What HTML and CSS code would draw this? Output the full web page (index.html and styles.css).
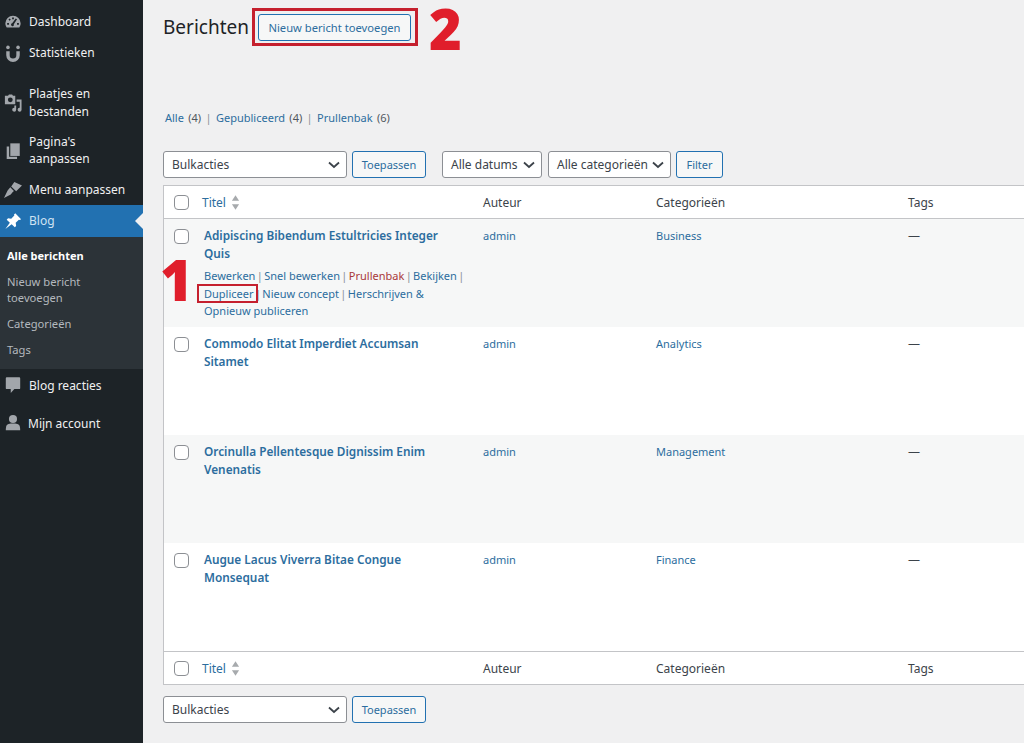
FILE: index.html
```html
<!DOCTYPE html>
<html lang="nl">
<head>
<meta charset="utf-8">
<title>Berichten</title>
<link rel="stylesheet" href="styles.css">
</head>
<body>
<div class="app">
  <nav class="sidebar">
    <ul class="menu">
      <li class="item h31 first"><svg class="ico" viewBox="0 0 20 20"><path d="M10 3a8.500 8.500 0 0 0-8.500 8.500c0 1.800.6 3.400 1.500 4.500h14c.9-1.100 1.500-2.700 1.500-4.500A8.500 8.500 0 0 0 10 3zM9 5h2v2H9zM5 7l1.500-1 1 1.500-1.500 1zM3.500 11h2v2h-2zM14.500 11h2v2h-2zM13 6.200l1.500.8-3.600 5.500a1.600 1.600 0 1 1-1.800-1z" fill-rule="evenodd"/></svg><span>Dashboard</span></li>
      <li class="item h31"><svg class="ico" viewBox="0 0 20 20"><path d="M2.500 8h3.800v4.500a3.700 3.700 0 0 0 7.400 0V8h3.800v4.500a7.500 7.500 0 0 1-15 0z"/><circle cx="4.400" cy="3.800" r="2"/><circle cx="15.600" cy="3.800" r="2"/></svg><span>Statistieken</span></li>
      <li class="item media"><svg class="ico" viewBox="0 0 20 20"><path d="M1 2h3.500l1-1.500h3.500l1 1.500h2.500v9.500H1zM7 3.800a2.700 2.700 0 1 0 0 5.400 2.700 2.700 0 0 0 0-5.400z" fill-rule="evenodd"/><path d="M14 6h5.500v11.500a2.200 2.200 0 1 1-2-2.200V8.500H14zM13.500 12.800v4.700a2.200 2.200 0 1 1-2-2.200v-2.500z"/></svg><span>Plaatjes en bestanden</span></li>
      <li class="item pages"><svg class="ico" viewBox="0 0 20 20"><path d="M7 1.500h10.500v14H7z"/><path d="M3 5h2.700v11.500h8.800V19H3z"/></svg><span>Pagina's aanpassen</span></li>
      <li class="item h31"><svg class="ico" viewBox="0 0 20 20"><path d="M20 5 11.500 1 8 6l5.500 5.500zM7 7 4 10.500 0 19l7.500-4 2-2.500 1.500-1.500z"/></svg><span>Menu aanpassen</span></li>
      <li class="item current"><svg class="ico" viewBox="0 0 20 20"><path d="M12.500 1.500 19 8l-1.500 1-1-.5-3.500 3.500.5 3.500-1.500 1.500-3.500-3.500L1.500 19l5-7L3 8.500 4.500 7l3.500.5L11.500 4 11 3z"/></svg><span>Blog</span><i class="notch"></i></li>
      <li class="submenu">
        <a class="sub active">Alle berichten</a>
        <a class="sub">Nieuw bericht toevoegen</a>
        <a class="sub">Categorieën</a>
        <a class="sub">Tags</a>
      </li>
      <li class="item reacties"><svg class="ico" viewBox="0 0 20 20"><path d="M3 1.500h14a1 1 0 0 1 1 1v11a1 1 0 0 1-1 1h-5.500L7.500 19v-4.500H3a1 1 0 0 1-1-1v-11a1 1 0 0 1 1-1z"/></svg><span>Blog reacties</span></li>
      <li class="item account"><svg class="ico" viewBox="0 0 20 20"><circle cx="10" cy="5.500" r="4.500"/><path d="M3 12.500c1-1.300 3-1.800 4.500-2h5c1.500.2 3.500.7 4.500 2 .6.800 1 3 1 5.500H2c0-2.500.4-4.700 1-5.500z"/></svg><span>Mijn account</span></li>
    </ul>
  </nav>

  <main class="content">
    <header class="head">
      <h1>Berichten</h1>
      <a class="btn new">Nieuw bericht toevoegen<b class="mark mark-new"></b></a>
      <strong class="num num-2">2</strong>
    </header>

    <p class="filters"><a>Alle</a> (4) <em>|</em> <a>Gepubliceerd</a> (4) <em>|</em> <a>Prullenbak</a> (6)</p>

    <div class="toolbar">
      <div class="select bulk">Bulkacties<svg viewBox="0 0 12 8"><path d="M1 1.500 6 6l5-4.500"/></svg></div>
      <a class="btn apply">Toepassen</a>
      <div class="select dates">Alle datums<svg viewBox="0 0 12 8"><path d="M1 1.500 6 6l5-4.500"/></svg></div>
      <div class="select cats">Alle categorieën<svg viewBox="0 0 12 8"><path d="M1 1.500 6 6l5-4.500"/></svg></div>
      <a class="btn filter">Filter</a>
    </div>

    <table class="posts">
      <thead>
        <tr class="hrow">
          <th class="c-check"><i class="box"></i></th>
          <th class="c-title"><a>Titel</a><svg class="sort" viewBox="0 0 10 16"><path d="M5 0 9 6H1zM5 16 1 10h8z"/></svg></th>
          <th class="c-author">Auteur</th>
          <th class="c-cat">Categorieën</th>
          <th class="c-tags">Tags</th>
        </tr>
      </thead>
      <tbody>
        <tr class="row alt">
          <td class="c-check"><i class="box"></i></td>
          <td class="c-title">
            <a class="ptitle">Adipiscing Bibendum Estultricies Integer Quis</a>
            <div class="actions"><a>Bewerken</a> <em>|</em> <a>Snel bewerken</a> <em>|</em> <a class="trash">Prullenbak</a> <em>|</em> <a>Bekijken</a> <em>|</em> <a class="dup">Dupliceer<b class="mark mark-dup"></b></a> <em>|</em> <a>Nieuw concept</a> <em>|</em> <a>Herschrijven &amp; Opnieuw publiceren</a></div>
            <strong class="num num-1">1</strong>
          </td>
          <td class="c-author"><a>admin</a></td>
          <td class="c-cat"><a>Business</a></td>
          <td class="c-tags">—</td>
        </tr>
        <tr class="row">
          <td class="c-check"><i class="box"></i></td>
          <td class="c-title"><a class="ptitle">Commodo Elitat Imperdiet Accumsan Sitamet</a></td>
          <td class="c-author"><a>admin</a></td>
          <td class="c-cat"><a>Analytics</a></td>
          <td class="c-tags">—</td>
        </tr>
        <tr class="row alt">
          <td class="c-check"><i class="box"></i></td>
          <td class="c-title"><a class="ptitle">Orcinulla Pellentesque Dignissim Enim Venenatis</a></td>
          <td class="c-author"><a>admin</a></td>
          <td class="c-cat"><a>Management</a></td>
          <td class="c-tags">—</td>
        </tr>
        <tr class="row">
          <td class="c-check"><i class="box"></i></td>
          <td class="c-title"><a class="ptitle">Augue Lacus Viverra Bitae Congue Monsequat</a></td>
          <td class="c-author"><a>admin</a></td>
          <td class="c-cat"><a>Finance</a></td>
          <td class="c-tags">—</td>
        </tr>
      </tbody>
      <tfoot>
        <tr class="frow">
          <th class="c-check"><i class="box"></i></th>
          <th class="c-title"><a>Titel</a><svg class="sort" viewBox="0 0 10 16"><path d="M5 0 9 6H1zM5 16 1 10h8z"/></svg></th>
          <th class="c-author">Auteur</th>
          <th class="c-cat">Categorieën</th>
          <th class="c-tags">Tags</th>
        </tr>
      </tfoot>
    </table>

    <div class="toolbar bottom">
      <div class="select bulk">Bulkacties<svg viewBox="0 0 12 8"><path d="M1 1.500 6 6l5-4.500"/></svg></div>
      <a class="btn apply">Toepassen</a>
    </div>
  </main>
</div>
</body>
</html>
```
FILE: styles.css
```css
* { box-sizing: border-box; }
html, body { margin: 0; height: 743px; overflow: hidden; }
body {
  font-family: "Noto Sans", "Open Sans", "Liberation Sans", sans-serif;
  font-size: 12px;
  color: #3c434a;
  background: #f0f0f1;
}
a { color: #2c6d9e; text-decoration: none; }
em { font-style: normal; color: #8a9096; }

.app { display: flex; height: 743px; }

/* sidebar */
.sidebar { width: 143px; flex: none; background: #1d2327; color: #f0f0f1; }
.menu { list-style: none; margin: 0; padding: 6px 0 0; }
.item { display: flex; align-items: center; padding-left: 29px; position: relative; line-height: 17px; }
.item span { display: block; }
.ico { position: absolute; left: 4px; width: 18px; height: 18px; fill: #a2a6ab; }
.h31 { height: 31px; }
.media { height: 48px; margin-top: 11px; padding-right: 40px; line-height: 18px; }
.pages { height: 47px; padding-right: 40px; line-height: 16.500px; }
.current { height: 32px; padding-bottom: 2px; background: #2271b1; color: #cfe3f3; }
.current .ico { fill: #fff; top: 7px; }
.notch { position: absolute; right: 0; top: 8px; width: 0; height: 0; border: 8px solid transparent; border-right-color: #f0f0f1; border-left-width: 0; }
.submenu { background: #2c3338; padding: 11px 40px 8px 7px; height: 132px; font-size: 11.200px; }
.sub { display: block; color: #b4b9be; line-height: 16px; margin-bottom: 10px; }
.sub.active { color: #fff; font-weight: 700; font-size: 11px; }
.reacties { height: 32px; }
.account { height: 44px; }
.account span { margin-left: -1px; }

/* content */
.content { flex: 1; min-width: 0; padding: 0 0 0 20px; position: relative; overflow: hidden; }
.head { display: flex; align-items: center; height: 54px; position: relative; }
h1 { font-size: 19px; font-weight: 400; color: #1d2327; margin: 0 9px 0 0; }
.btn { display: flex; align-items: center; justify-content: center; height: 27px; border: 1px solid #2271b1; border-radius: 3px; background: #f6f7f7; color: #2c6d9e; position: relative; font-size: 11px; }
.new { width: 153px; font-size: 11.200px; }
.mark { position: absolute; border: 3px solid #c5202e; pointer-events: none; }
.mark-new { left: -7px; top: -7px; right: -8px; bottom: -6px; }
.num { position: absolute; color: #e01e2b; font-family: "Open Sans", "Noto Sans", sans-serif; font-weight: 800; }
.num-2 { left: 266px; top: 3px; font-size: 56px; line-height: 50px; }

.filters { margin: 54px 0 0 2px; height: 19px; line-height: 19px; font-size: 11px; color: #50575e; word-spacing: 1.500px; }

.toolbar { display: flex; margin-top: 24px; height: 27px; }
.select { display: flex; align-items: center; justify-content: space-between; height: 27px; padding: 0 6px 0 8px; background: #fff; border: 1px solid #8c8f94; border-radius: 3px; color: #3c434a; }
.select svg { width: 12px; height: 8px; fill: none; stroke: #3c434a; stroke-width: 1.800; }
.bulk { width: 184px; }
.apply { width: 74px; margin-left: 5px; }
.dates { width: 100px; margin-left: 16px; }
.cats { width: 123px; margin-left: 6px; }
.filter { width: 47px; margin-left: 5px; }

.posts { border-collapse: separate; border-spacing: 0; table-layout: fixed; width: 880px; margin-top: 7px; background: #fff; border: 1px solid #c3c4c7; border-right: 0; }
.posts th, .posts td { padding: 0; font-weight: 400; text-align: left; }
.c-check { width: 30px; padding-left: 10px !important; }
.c-title { width: 289px; }
.c-author { width: 173px; }
.c-cat { width: 252px; }
.c-tags { width: 136px; }
.hrow { height: 33px; }
.hrow th { border-bottom: 1px solid #c3c4c7; }
.frow { height: 33px; }
.frow th { border-top: 1px solid #c3c4c7; }
thead .c-title, tfoot .c-title { padding-left: 8px !important; }
.sort { width: 9px; height: 15px; fill: #a7aaad; margin-left: 5px; vertical-align: -3px; }
.box { display: block; width: 15px; height: 15px; background: #fff; border: 1px solid #8c8f94; border-radius: 4px; }
.row { height: 108px; }
.row td { vertical-align: top; padding-top: 8px; line-height: 18px; font-size: 11px; }
.row .c-tags { font-size: 12px; }
.row .c-title { padding-left: 10px; padding-right: 17px; position: relative; }
.row .box { margin-top: 2px; }
.alt { background: #f6f7f7; }
.ptitle { font-weight: 600; display: block; font-size: 11.800px; margin-top: -1px; }
.actions { margin-top: 5px; line-height: 17.500px; font-size: 11px; word-spacing: -1.500px; }
.actions a { word-spacing: 0; }
.trash { color: #a8383a; }
.dup { position: relative; }
.mark-dup { left: -7px; top: -2px; right: -4px; bottom: -2px; border-width: 2px; }
.num-1 { left: -34px; top: 26px; font-size: 56px; line-height: 68px; }
.bottom { margin-top: 11px; }
```
